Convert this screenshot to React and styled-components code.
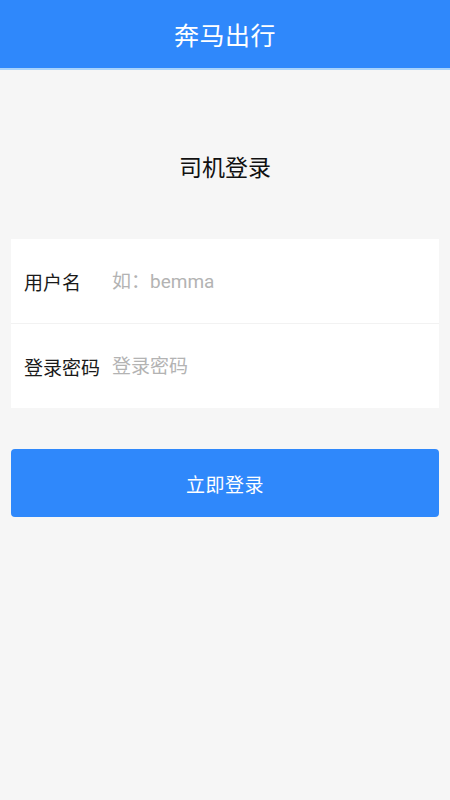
import styled, { createGlobalStyle } from "styled-components";

const GlobalStyle = createGlobalStyle`
  html, body {
    margin: 0;
    padding: 0;
    background: #f6f6f6;
    font-family: "Noto Sans CJK SC", "Noto Sans", sans-serif;
  }
`;

const Page = styled.div`
  min-height: 800px;
  background: #f6f6f6;
`;

const Header = styled.header`
  height: 68px;
  background: #2f88fb;
  border-bottom: 2px solid #a9d3fb;
  display: flex;
  align-items: center;
  justify-content: center;
  color: #fff;
  font-size: 25px;
  letter-spacing: 0.5px;
`;

const Title = styled.h2`
  margin: 0;
  padding: 80px 0 57px;
  text-align: center;
  font-size: 23px;
  font-weight: 400;
  line-height: 32px;
  color: #111;
`;

const Card = styled.div`
  margin: 0 11px;
  background: #fff;
`;

const Row = styled.label`
  display: flex;
  align-items: center;
  height: 84px;
  padding: 0 13px;
  & + & {
    border-top: 1px solid #f2f2f2;
  }
`;

const Label = styled.span`
  width: 88px;
  flex-shrink: 0;
  font-size: 19px;
  color: #1a1a1a;
`;

const Input = styled.input`
  flex: 1;
  min-width: 0;
  border: none;
  outline: none;
  background: transparent;
  padding: 0;
  font-family: Roboto, "Noto Sans CJK SC", sans-serif;
  font-size: 19px;
  color: #333;
  &::placeholder {
    color: #b3b3b3;
  }
`;

const Button = styled.button`
  display: block;
  width: calc(100% - 22px);
  height: 68px;
  margin: 41px 11px 0;
  border: none;
  border-radius: 4px;
  background: #2f88fb;
  color: #fff;
  font-family: inherit;
  font-size: 19px;
  letter-spacing: 0.5px;
`;

export default function App() {
  return (
    <Page>
      <GlobalStyle />
      <Header>奔马出行</Header>
      <Title>司机登录</Title>
      <Card>
        <Row>
          <Label>用户名</Label>
          <Input placeholder="如：bemma" />
        </Row>
        <Row>
          <Label>登录密码</Label>
          <Input type="password" placeholder="登录密码" />
        </Row>
      </Card>
      <Button>立即登录</Button>
    </Page>
  );
}
